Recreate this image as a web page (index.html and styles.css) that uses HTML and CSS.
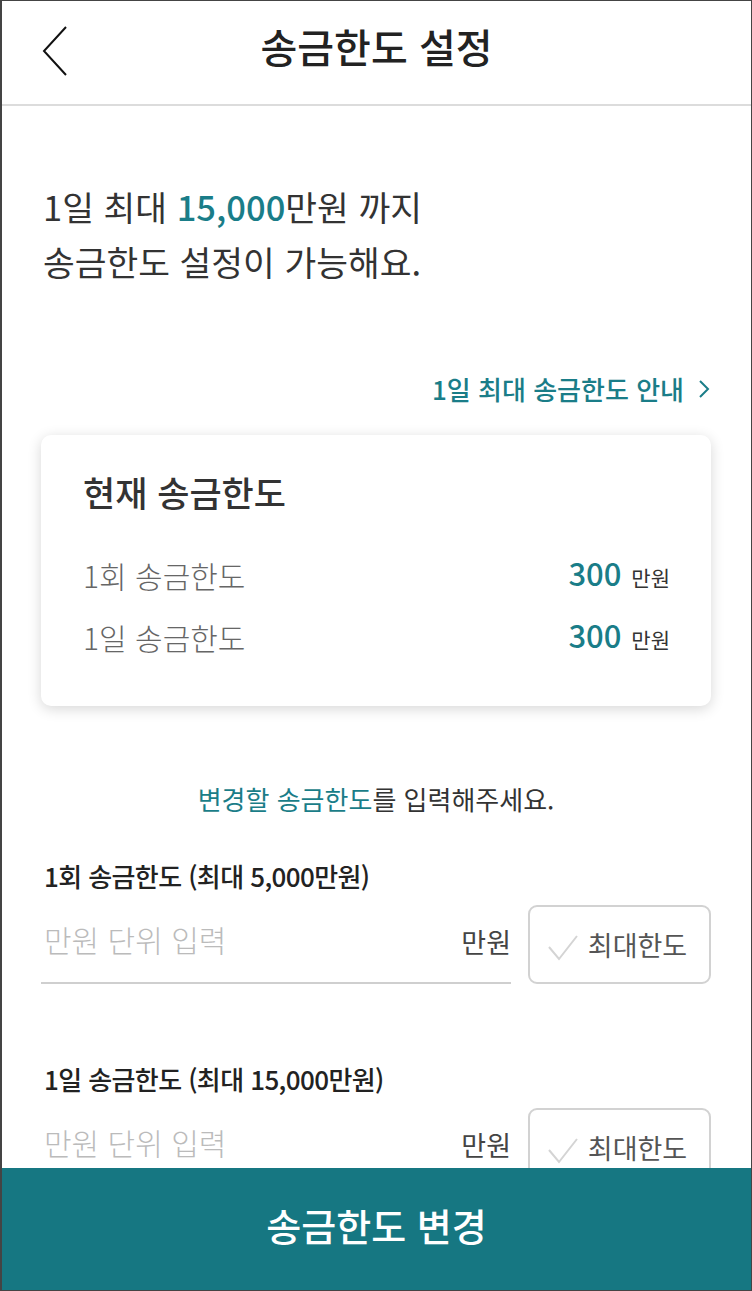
FILE: index.html
```html
<!DOCTYPE html>
<html lang="ko">
<head>
  <meta charset="UTF-8">
  <meta name="viewport" content="width=device-width, initial-scale=1.0">
  <title>송금한도 설정</title>
  <link rel="stylesheet" href="styles.css">
</head>
<body>
  <div class="screen">
    <div class="header">
      <button class="back-button" aria-label="뒤로">
        <svg width="26" height="50" viewBox="0 0 26 50">
          <polyline points="24,1 2,25 24,49" fill="none" stroke="#111" stroke-width="2"/>
        </svg>
      </button>
      <div class="title">송금한도 설정</div>
    </div>

    <div class="content">
      <p class="headline">1일 최대 <span class="point">15,000</span>만원 까지<br>송금한도 설정이 가능해요.</p>

      <div class="guide-link">
        <span>1일 최대 송금한도 안내</span>
        <svg width="12" height="20" viewBox="0 0 12 20">
          <polyline points="2,2 10,10 2,18" fill="none" stroke="#1a7d88" stroke-width="2"/>
        </svg>
      </div>

      <div class="limit-card">
        <div class="card-title">현재 송금한도</div>
        <div class="limit-row">
          <span class="limit-name">1회 송금한도</span>
          <span class="limit-value"><b>300</b> 만원</span>
        </div>
        <div class="limit-row">
          <span class="limit-name">1일 송금한도</span>
          <span class="limit-value"><b>300</b> 만원</span>
        </div>
      </div>

      <p class="notice"><span class="point">변경할 송금한도</span>를 입력해주세요.</p>

      <div class="field">
        <div class="field-label">1회 송금한도 (최대 5,000만원)</div>
        <div class="field-row">
          <div class="input-box">
            <input type="text" placeholder="만원 단위 입력">
            <span class="unit">만원</span>
          </div>
          <button class="max-button">
            <svg width="30" height="26" viewBox="0 0 30 26">
              <polyline points="1,12 11,24 29,1" fill="none" stroke="#d4d4d4" stroke-width="2"/>
            </svg>
            <span>최대한도</span>
          </button>
        </div>
      </div>

      <div class="field">
        <div class="field-label">1일 송금한도 (최대 15,000만원)</div>
        <div class="field-row">
          <div class="input-box">
            <input type="text" placeholder="만원 단위 입력">
            <span class="unit">만원</span>
          </div>
          <button class="max-button">
            <svg width="30" height="26" viewBox="0 0 30 26">
              <polyline points="1,12 11,24 29,1" fill="none" stroke="#d4d4d4" stroke-width="2"/>
            </svg>
            <span>최대한도</span>
          </button>
        </div>
      </div>
    </div>

    <button class="submit-button">송금한도 변경</button>
  </div>
</body>
</html>
```

FILE: styles.css
```css
* {
  box-sizing: border-box;
}
body {
  margin: 0;
  padding: 0;
  background-color: #fff;
  font-family: "Noto Sans CJK KR", "Noto Sans", sans-serif;
  color: #333;
}
.screen {
  height: 1291px;
  display: flex;
  flex-direction: column;
  border: 1px solid #444;
  border-left-width: 2px;
  overflow: hidden;
}
.header {
  height: 105px;
  flex-shrink: 0;
  display: flex;
  align-items: center;
  justify-content: center;
  position: relative;
  border-bottom: 2px solid #dcdcdc;
}
.back-button {
  position: absolute;
  left: 40px;
  top: 25px;
  padding: 0;
  border: none;
  background: none;
}
.back-button svg {
  display: block;
}
.title {
  font-size: 40px;
  line-height: 56px;
  font-weight: 500;
  color: #222;
  margin-top: -14px;
}
.content {
  flex: 1;
  overflow: hidden;
  padding: 0 40px 0 39px;
}
.point {
  color: #1a7d88;
}
.headline {
  margin: 73px 0 0 2px;
  font-size: 34.5px;
  line-height: 55px;
  font-weight: 400;
  color: #333;
}
.headline .point {
  font-weight: 500;
}
.guide-link {
  margin-top: 83px;
  display: flex;
  justify-content: flex-end;
  align-items: center;
  gap: 14px;
  padding-right: 1px;
  font-size: 26px;
  line-height: 34px;
  font-weight: 500;
  color: #1a7d88;
}
.limit-card {
  margin-top: 29px;
  background-color: #fff;
  border-radius: 10px;
  box-shadow: 0 3px 14px rgba(0,0,0,0.16);
  padding: 37px 41px 47px 42px;
}
.card-title {
  font-size: 35px;
  line-height: 40px;
  font-weight: 500;
  color: #333;
}
.limit-row {
  display: flex;
  justify-content: space-between;
  align-items: center;
  height: 44px;
  margin-top: 18px;
}
.card-title + .limit-row {
  margin-top: 41px;
}
.limit-name {
  font-size: 30px;
  line-height: 44px;
  font-weight: 300;
  color: #666;
}
.limit-value {
  font-size: 21px;
  line-height: 44px;
  color: #333;
}
.limit-value b {
  font-size: 31px;
  font-weight: 500;
  color: #1a7d88;
  margin-right: 4px;
}
.notice {
  margin: 76px 0 0;
  text-align: center;
  font-size: 26px;
  line-height: 34px;
  color: #333;
}
.field {
  margin-top: 43px;
}
.field + .field {
  margin-top: 78px;
}
.field-label {
  font-size: 26px;
  line-height: 34px;
  font-weight: 500;
  color: #222;
  letter-spacing: -0.6px;
  padding-left: 3px;
}
.field-row {
  display: flex;
  gap: 17px;
  margin-top: 12px;
}
.input-box {
  flex: 1;
  height: 79px;
  display: flex;
  align-items: flex-start;
  padding-top: 14px;
  border-bottom: 2px solid #cfcfcf;
}
.input-box input {
  flex: 1;
  min-width: 0;
  border: none;
  outline: none;
  padding: 0 0 0 3px;
  font-family: inherit;
  font-size: 30px;
  line-height: 40px;
  height: 40px;
  color: #333;
}
.input-box input::placeholder {
  color: #bbb;
  font-weight: 300;
}
.unit {
  margin-top: 6px;
  font-size: 27px;
  line-height: 34px;
  color: #444;
}
.max-button {
  width: 183px;
  height: 79px;
  border: 2px solid #d2d2d2;
  border-radius: 9px;
  background-color: #fff;
  display: flex;
  align-items: center;
  justify-content: center;
  gap: 10px;
  padding: 0 4px 0 0;
  font-family: inherit;
  font-size: 27px;
  color: #555;
}
.max-button svg {
  margin-top: 6px;
}
.submit-button {
  height: 122px;
  flex-shrink: 0;
  border: none;
  background-color: #167782;
  color: #fff;
  font-family: inherit;
  font-size: 38px;
  font-weight: 500;
  padding-bottom: 10px;
}
```
